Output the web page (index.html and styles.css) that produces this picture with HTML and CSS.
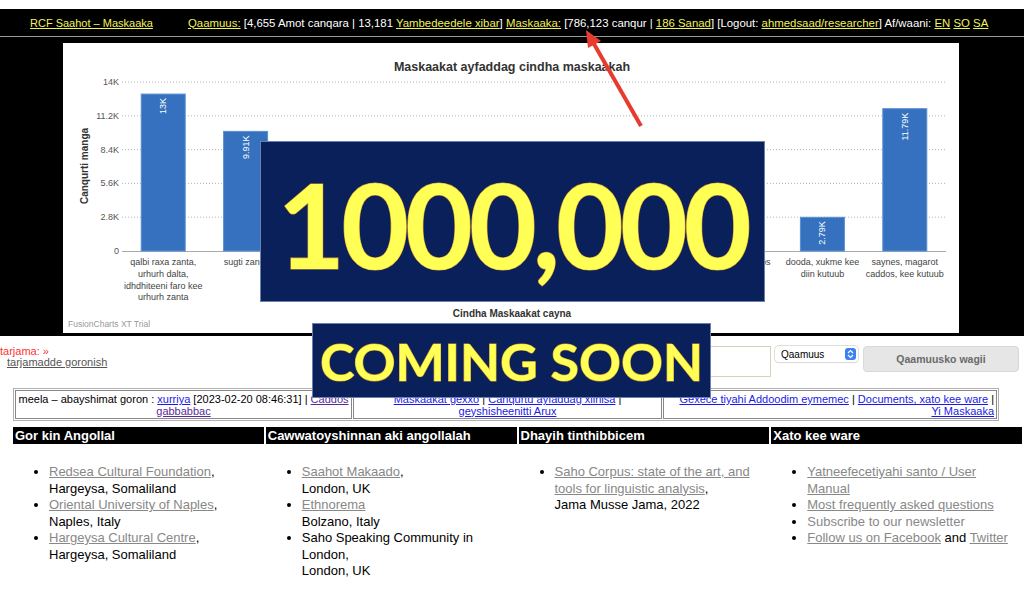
FILE: index.html
```html
<!DOCTYPE html>
<html lang="so">
<head>
  <meta charset="UTF-8" />
  <title>RCF Saahot – Maskaaka</title>
  <link rel="stylesheet" href="styles.css">
</head>
<body>
  <div class="topbar">
    <a class="brand" href="#">RCF Saahot – Maskaaka</a>
    <span class="stats">
      <a href="#">Qaamuus:</a> [4,655 Amot canqara | 13,181 <a href="#">Yambedeedele xibar</a>]
      <a href="#">Maskaaka:</a> [786,123 canqur | <a href="#">186 Sanad</a>]
      [Logout: <a href="#">ahmedsaad/researcher</a>]
      Af/waani: <a href="#">EN</a> <a href="#">SO</a> <a href="#">SA</a>
    </span>
  </div>

  <div class="chartwrap">
    <div class="chart">
      <svg id="chart" width="896" height="290" viewBox="0 0 896 290">
        <text class="caption" x="449" y="28">Maskaakat ayfaddag cindha maskaakah</text>
        <text class="axis-title" transform="rotate(-90 25 123)" x="25" y="123">Canqurti manga</text>
        <text class="axis-title" x="449" y="274">Cindha Maskaakat cayna</text>
        <text class="trial" x="5" y="284">FusionCharts XT Trial</text>
      </svg>
    </div>
  </div>

  <div class="tools">
    <div class="tarjama">
      <div class="hint">tarjama: »</div>
      <a href="#">tarjamadde goronish</a>
    </div>
    <form class="search" onsubmit="return false">
      <input type="text" />
      <span class="select">
        Qaamuus
        <svg width="11" height="12" viewBox="0 0 11 12">
          <rect width="11" height="12" rx="3" fill="#3b82f0" />
          <path d="M3 5 L5.5 2.5 L8 5 M3 7 L5.5 9.5 L8 7" fill="none" stroke="#fff" stroke-width="1.2" />
        </svg>
      </span>
      <button type="submit">Qaamuusko wagii</button>
    </form>
  </div>

  <table class="recent">
    <tr>
      <td class="c1">meela – abayshimat goron : <a href="#">xurriya</a> [2023-02-20 08:46:31] | <a class="seen" href="#">Caddos<br>gabbabbac</a></td>
      <td class="c2"><a href="#">Maskaakat gexxo</a> | <a href="#">Canqurtu ayfaddag xiinisa</a> |<br><a href="#">geyshisheenitti Arux</a></td>
      <td class="c3"><a href="#">Gexece tiyahi Addoodim eymemec</a> | <a href="#">Documents, xato kee ware</a> |<br><a href="#">Yi Maskaaka</a></td>
    </tr>
  </table>

  <div class="footer">
    <div class="col">
      <h3>Gor kin Angollal</h3>
      <ul>
        <li><a href="#">Redsea Cultural Foundation</a>,<br>Hargeysa, Somaliland</li>
        <li><a href="#">Oriental University of Naples</a>,<br>Naples, Italy</li>
        <li><a href="#">Hargeysa Cultural Centre</a>,<br>Hargeysa, Somaliland</li>
      </ul>
    </div>
    <div class="col">
      <h3>Cawwatoyshinnan aki angollalah</h3>
      <ul>
        <li><a href="#">Saahot Makaado</a>,<br>London, UK</li>
        <li><a href="#">Ethnorema</a><br>Bolzano, Italy</li>
        <li>Saho Speaking Community in London,<br>London, UK</li>
      </ul>
    </div>
    <div class="col">
      <h3>Dhayih tinthibbicem</h3>
      <ul>
        <li><a href="#">Saho Corpus: state of the art, and tools for linguistic analysis</a>,<br>Jama Musse Jama, 2022</li>
      </ul>
    </div>
    <div class="col">
      <h3>Xato kee ware</h3>
      <ul>
        <li><a href="#">Yatneefecetiyahi santo / User Manual</a></li>
        <li><a href="#">Most frequently asked questions</a></li>
        <li><span class="muted">Subscribe to our newsletter</span></li>
        <li><a href="#">Follow us on Facebook</a> and <a href="#">Twitter</a></li>
      </ul>
    </div>
  </div>

  <!-- announcement overlays -->
  <div class="banner big">1000,000</div>
  <div class="banner soon">COMING SOON</div>
  <svg class="arrow" width="1024" height="140" viewBox="0 0 1024 140">
    <line x1="641" y1="126" x2="594" y2="44" stroke="#e63b2e" stroke-width="4" />
    <polygon points="586,30 601,41 588,48" fill="#e63b2e" />
  </svg>

  <script>
    const data = [
      { label: ["qalbi raxa zanta,", "urhurh dalta,", "idhdhiteeni faro kee", "urhurh zanta"], value: 13000, text: "13K" },
      { label: ["sugti zanta"], value: 9910, text: "9.91K" },
      { label: ["gabbabbac"], value: 6540, text: "6.54K" },
      { label: ["ayfaddag,", "tarjama"], value: 3120, text: "3.12K" },
      { label: ["siyaasa"], value: 5230, text: "5.23K" },
      { label: ["diraasa"], value: 1860, text: "1.86K" },
      { label: ["taarikh"], value: 4410, text: "4.41K" },
      { label: ["afa kee caddos"], value: 2450, text: "2.45K" },
      { label: ["dooda, xukme kee", "diin kutuub"], value: 2790, text: "2.79K" },
      { label: ["saynes, magarot", "caddos, kee kutuub"], value: 11790, text: "11.79K" },
    ];

    function drawChart() {
      const svg = document.getElementById("chart");
      const plotLeft = 59, plotRight = 883, plotBase = 208, plotTop = 39, max = 14000;
      const slot = (plotRight - plotLeft) / data.length;

      function add(tag, attrs, text) {
        const el = document.createElementNS("http://www.w3.org/2000/svg", tag);
        for (const k in attrs) el.setAttribute(k, attrs[k]);
        if (text) el.textContent = text;
        svg.appendChild(el);
        return el;
      }

      // grid and y axis labels
      for (let i = 0; i <= 5; i++) {
        const v = i * 2800;
        const y = plotBase - (v / max) * (plotBase - plotTop);
        if (i > 0) add("line", { x1: plotLeft, x2: plotRight, y1: y, y2: y, class: "grid" });
        add("text", { x: 56, y: y + 3, class: "tick" }, i ? v / 1000 + "K" : "0");
      }
      add("line", { x1: plotLeft, x2: plotRight, y1: plotBase + 0.5, y2: plotBase + 0.5, class: "base" });

      data.forEach((d, i) => {
        const cx = plotLeft + slot * i + slot / 2;
        const h = (d.value / max) * (plotBase - plotTop);
        const y = plotBase - h;
        add("rect", { x: cx - 22, y: y, width: 44, height: h, class: "bar" });
        add("text", {
          x: cx + 3,
          y: y + 4,
          class: "value",
          transform: `rotate(-90 ${cx + 3} ${y + 4})`,
        }, d.text);
        d.label.forEach((line, j) => {
          add("text", { x: cx, y: 222 + j * 11.8, class: "xlabel" }, line);
        });
      });
    }

    drawChart();
  </script>
</body>
</html>
```

FILE: styles.css
```css
body {
  margin: 0;
  font-family: "Liberation Sans", Arial, sans-serif;
  color: #000;
  background: #fff;
}
a {
  color: #888;
}
.topbar {
  display: flex;
  align-items: center;
  height: 27px;
  margin-top: 9px;
  padding-left: 30px;
  background: #000;
  border-bottom: 1px solid #9a9a9a;
  color: #fff;
  font-size: 11px;
  white-space: nowrap;
}
.topbar a {
  color: #f2f25a;
}
.brand {
  width: 158px;
}
.stats {
  font-size: 11.4px;
}
.chartwrap {
  background: #000;
  padding: 6px 0 3px 63px;
}
.chart {
  width: 896px;
  height: 290px;
  background: #fff;
}
.chart svg {
  display: block;
}
.chart text {
  font-family: "Liberation Sans", Arial, sans-serif;
}
.caption {
  font-size: 12.5px;
  font-weight: bold;
  fill: #333;
  text-anchor: middle;
}
.axis-title {
  font-size: 10px;
  font-weight: bold;
  fill: #333;
  text-anchor: middle;
}
.trial {
  font-size: 8.5px;
  fill: #999;
}
.tick {
  font-size: 9px;
  fill: #555;
  text-anchor: end;
}
.grid {
  stroke: #b5b5b5;
  stroke-dasharray: 1 2;
}
.base {
  stroke: #aaa;
}
.bar {
  fill: #3571be;
  stroke: #5b8fd3;
  stroke-width: 1;
}
.value {
  font-size: 9px;
  fill: #fff;
  text-anchor: end;
}
.xlabel {
  font-size: 9px;
  fill: #444;
  text-anchor: middle;
}
.tools {
  display: flex;
  justify-content: space-between;
  align-items: flex-start;
  padding: 10px 5px 0 0;
}
.tarjama {
  font-size: 11px;
  line-height: 11px;
}
.tarjama .hint {
  color: #f33;
}
.tarjama a {
  display: block;
  margin-left: 7px;
  color: #555;
}
.search {
  display: flex;
  align-items: flex-start;
  margin: 0;
}
.search input {
  box-sizing: border-box;
  width: 250px;
  height: 31px;
  margin: 0 4px 0 0;
  border: 1px solid #d8d0bb;
}
.select {
  box-sizing: border-box;
  display: flex;
  align-items: center;
  justify-content: space-between;
  width: 83px;
  height: 16px;
  padding: 0 2px 0 6px;
  border-radius: 4px;
  background: #fff;
  box-shadow: 0 0 0 1px #ddd, 0 1px 1px #ccc;
  font-size: 10px;
}
.search button {
  width: 156px;
  height: 26px;
  margin-left: 5px;
  border: 1px solid #d8d8d8;
  border-radius: 4px;
  background: #e6e6e6;
  color: #6a6a6a;
  font-family: "Liberation Sans", Arial, sans-serif;
  font-size: 10.5px;
  font-weight: bold;
}
.recent {
  table-layout: fixed;
  width: 986px;
  margin: 11px 0 0 13px;
  border: 1px solid #b0b0b0;
  border-spacing: 1px;
  font-size: 11px;
  line-height: 11.5px;
}
.recent td {
  padding: 3px 2px 1px;
  border: 1px solid #888;
  vertical-align: top;
}
.recent a {
  color: #1a1ae6;
}
.recent a.seen {
  color: #5a2a9a;
}
.c1 {
  width: 331px;
  text-align: center;
}
.c2 {
  width: 303px;
  text-align: center;
}
.c3 {
  text-align: right;
}
.footer {
  display: grid;
  grid-template-columns: repeat(4, 1fr);
  gap: 2px;
  margin: 6px 2px 0 13px;
}
.footer h3 {
  height: 17px;
  margin: 0;
  padding-left: 2px;
  background: #000;
  color: #fff;
  font-size: 13px;
  line-height: 17px;
}
.footer ul {
  margin: 20px 0 0;
  padding-left: 36px;
  font-size: 13px;
  line-height: 16.5px;
}
.muted {
  color: #888;
}
.banner {
  position: absolute;
  box-sizing: border-box;
  display: flex;
  align-items: center;
  justify-content: center;
  background: #0a205a;
  border: 1px solid #6d80ad;
  color: #ffff55;
  font-family: Lato, "Open Sans", sans-serif;
  font-weight: bold;
  -webkit-text-stroke: 1.2px #d39b32;
  paint-order: stroke fill;
  white-space: nowrap;
}
.big {
  left: 260px;
  top: 141px;
  width: 505px;
  height: 161px;
  padding-top: 4px;
  font-size: 117px;
  letter-spacing: -4px;
}
.soon {
  left: 312px;
  top: 323px;
  width: 399px;
  height: 75px;
  font-size: 52px;
}
.arrow {
  position: absolute;
  left: 0;
  top: 0;
  pointer-events: none;
}
```
